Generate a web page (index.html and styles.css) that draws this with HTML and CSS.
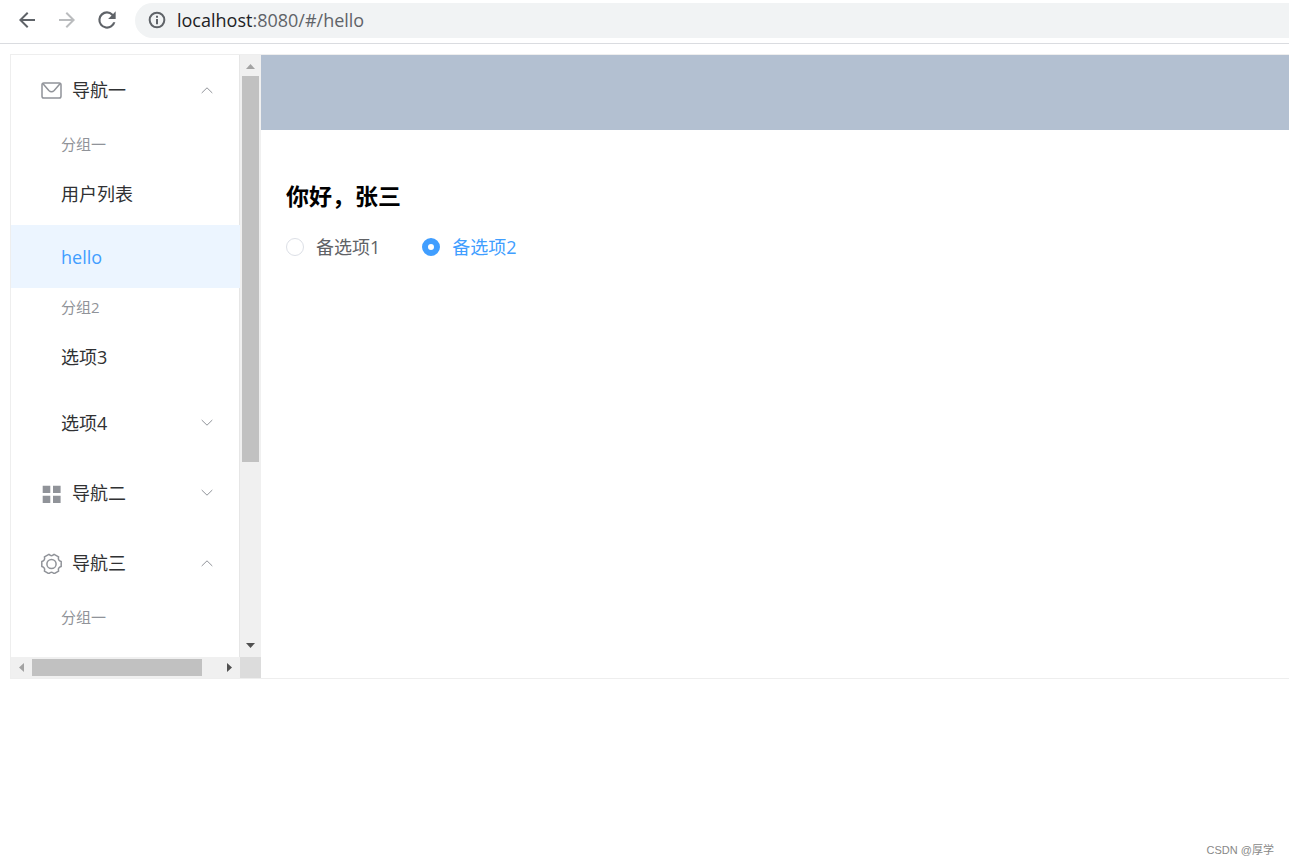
FILE: index.html
```html
<!DOCTYPE html>
<html lang="zh-CN">
<head>
<meta charset="utf-8">
<title>localhost:8080/#/hello</title>
<link rel="stylesheet" href="styles.css">
</head>
<body>
<header class="toolbar">
  <button class="tool" type="button" aria-label="Back">
    <svg viewBox="0 0 24 24" width="24" height="24"><path fill="#5f6368" d="M20 11H7.830l5.590-5.590L12 4l-8 8 8 8 1.410-1.410L7.830 13H20z"/></svg>
  </button>
  <button class="tool" type="button" aria-label="Forward">
    <svg viewBox="0 0 24 24" width="24" height="24"><path fill="#babcbe" d="M4 11h12.170l-5.590-5.590L12 4l8 8-8 8-1.410-1.410L16.170 13H4z"/></svg>
  </button>
  <button class="tool" type="button" aria-label="Reload">
    <svg viewBox="0 0 24 24" width="26" height="26"><path fill="#5f6368" d="M17.650 6.350A7.960 7.960 0 0 0 12 4a8 8 0 1 0 7.730 10h-2.080A6 6 0 1 1 12 6c1.660 0 3.140.690 4.220 1.780L13 11h7V4z"/></svg>
  </button>
  <div class="address">
    <svg viewBox="0 0 24 24" width="20" height="20"><circle cx="12" cy="12" r="8.800" fill="none" stroke="#5f6368" stroke-width="2.400"/><path fill="#5f6368" d="M10.800 7h2.400v2.300h-2.400zM10.800 10.800h2.400V17h-2.400z"/></svg>
    <div class="url" role="textbox" aria-label="Address" contenteditable="true" spellcheck="false"><span class="host">localhost</span>:8080/#/hello</div>
  </div>
</header>
<div class="app">
  <aside class="side">
    <nav class="menu">
      <a class="sub" href="#/nav1">
        <svg class="icon" viewBox="0 0 22 22"><rect x="1" y="4" width="19" height="15" rx="1.800"/><path d="M2 4.800l5.800 6.700q2.700 2.600 5.400 0l5.800-6.700"/></svg>
        <span class="name">导航一</span>
        <svg class="arrow up" viewBox="0 0 12 8"><path d="M.700 1l5.300 5.200L11.300 1"/></svg>
      </a>
      <div class="group">分组一</div>
      <a class="item" href="#/users">用户列表</a>
      <a class="item active" href="#/hello">hello</a>
      <div class="group">分组2</div>
      <a class="item" href="#/option3">选项3</a>
      <a class="sub nested" href="#/option4">
        <span class="name">选项4</span>
        <svg class="arrow" viewBox="0 0 12 8"><path d="M.700 1l5.300 5.200L11.300 1"/></svg>
      </a>
      <a class="sub" href="#/nav2">
        <svg class="icon solid" viewBox="0 0 22 22"><path d="M1.700 3.700h7.600V11H1.700zM12 3.700h7.600V11H12zM1.700 13.700h7.600V21H1.700zM12 13.700h7.600V21H12z"/></svg>
        <span class="name">导航二</span>
        <svg class="arrow" viewBox="0 0 12 8"><path d="M.700 1l5.300 5.200L11.300 1"/></svg>
      </a>
      <a class="sub" href="#/nav3">
        <svg class="icon" viewBox="0.500 -0.500 22 22"><circle cx="11" cy="11.500" r="4.600"/><path stroke-linejoin="round" d="M13.600 1.800L18.100 4.400Q17.100 8 20.700 8.900V14.100Q17.100 15 18.100 18.600L13.600 21.200Q11 18.500 8.400 21.200L3.900 18.600Q4.900 15 1.300 14.100V8.900Q4.900 8 3.900 4.400L8.400 1.800Q11 4.500 13.600 1.800Z"/></svg>
        <span class="name">导航三</span>
        <svg class="arrow up" viewBox="0 0 12 8"><path d="M.700 1l5.300 5.200L11.300 1"/></svg>
      </a>
      <div class="group">分组一</div>
    </nav>
    <div class="vbar">
      <svg class="tip" viewBox="0 0 9 5" width="9" height="5"><path fill="#a3a3a3" d="M0 5L4.500 0 9 5z"/></svg>
      <div class="track"><div class="thumb"></div></div>
      <svg class="tip" viewBox="0 0 9 5" width="9" height="5"><path fill="#505050" d="M0 0L4.500 5 9 0z"/></svg>
    </div>
    <div class="hbar">
      <svg class="tip" viewBox="0 0 5 9" width="5" height="9"><path fill="#a3a3a3" d="M5 0L0 4.500 5 9z"/></svg>
      <div class="track"><div class="thumb"></div></div>
      <svg class="tip" viewBox="0 0 5 9" width="5" height="9"><path fill="#505050" d="M0 0l5 4.500L0 9z"/></svg>
    </div>
    <div class="corner"></div>
  </aside>
  <div class="content">
    <div class="banner"></div>
    <main class="main">
      <h1 class="title">你好，张三</h1>
      <div class="radios">
        <label class="radio"><input type="radio" name="option" value="1">备选项1</label>
        <label class="radio"><input type="radio" name="option" value="2" checked>备选项2</label>
      </div>
    </main>
  </div>
</div>
<footer class="credit">CSDN @厚学</footer>
</body>
</html>
```
FILE: styles.css
```css
* {
  box-sizing: border-box;
}

body {
  display: flex;
  flex-direction: column;
  min-height: 100vh;
  margin: 0;
  background: #fff;
  color: #303133;
  font: 18px/24px "Open Sans", "Noto Sans CJK SC", sans-serif;
}

a {
  color: inherit;
  text-decoration: none;
}

.toolbar {
  display: flex;
  align-items: center;
  height: 44px;
  padding: 0 0 3px 7px;
  border-bottom: 1px solid #dadce0;
}

.tool {
  display: flex;
  align-items: center;
  justify-content: center;
  width: 40px;
  height: 40px;
  padding: 0;
  border: 0;
  background: none;
}

.address {
  display: flex;
  flex: 1;
  align-items: center;
  gap: 10px;
  height: 35px;
  margin-left: 8px;
  padding-left: 12px;
  border-radius: 18px 0 0 18px;
  background: #f1f3f4;
}

.url {
  flex: 1;
  color: #5f6368;
  font-size: 18px;
  outline: 0;
}

.host {
  color: #202124;
}

.app {
  display: flex;
  margin: 10px 0 0 10px;
  border: 1px solid #eee;
  border-right: 0;
}

.side {
  display: grid;
  flex: none;
  grid-template-columns: 1fr 21px;
  grid-template-rows: 1fr 21px;
  width: 250px;
}

.menu {
  padding-bottom: 22px;
  box-shadow: inset -1px 0 #e6e6e6;
}

.sub,
.item,
.group {
  display: flex;
  align-items: center;
  padding: 0 27px 0 30px;
}

.sub {
  height: 70px;
}

.item {
  height: 63px;
  padding-left: 50px;
}

.nested {
  padding-left: 50px;
}

.active {
  background: #ecf5ff;
  color: #409eff;
}

.group {
  height: 37px;
  padding-left: 50px;
  color: #909399;
  font-size: 15px;
}

.name {
  flex: 1;
}

.icon {
  width: 22px;
  height: 22px;
  margin-right: 9px;
  fill: none;
  stroke: #909399;
  stroke-width: 1.5;
}

.solid {
  fill: #909399;
  stroke: none;
}

.arrow {
  width: 12px;
  height: 8px;
  fill: none;
  stroke: #909399;
}

.up {
  transform: rotate(180deg);
}

.vbar,
.hbar {
  display: flex;
  align-items: center;
  background: #f0f0f0;
}

.vbar {
  flex-direction: column;
  padding: 9px 0;
}

.hbar {
  padding: 0 8px;
}

.tip {
  flex: none;
}

.track {
  flex: 1;
}

.vbar .track {
  width: 17px;
  margin: 7px 0;
}

.hbar .track {
  height: 17px;
  margin: 0 8px;
}

.thumb {
  background: #c1c1c1;
}

.vbar .thumb {
  height: 69%;
}

.hbar .thumb {
  width: 91%;
  height: 100%;
}

.corner {
  background: #dcdcdc;
}

.content {
  flex: 1;
}

.banner {
  height: 75px;
  background: #b3c0d1;
}

.main {
  padding: 50px 25px;
}

.title {
  margin: 0 0 23px;
  color: #000;
  font-size: 23px;
  line-height: 32px;
}

.radios {
  display: flex;
  gap: 42px;
}

.radio {
  display: flex;
  align-items: center;
  gap: 12px;
  color: #606266;
}

.radio input {
  appearance: none;
  width: 18px;
  height: 18px;
  margin: 0;
  border: 1px solid #dcdfe6;
  border-radius: 50%;
}

.radio input:checked {
  border: 6px solid #409eff;
}

.radio:has(:checked) {
  color: #409eff;
}

.credit {
  margin-top: auto;
  padding: 0 15px 3px;
  color: #888;
  font: 11px/24px "Liberation Sans", "Noto Sans CJK SC", sans-serif;
  text-align: right;
}
```
